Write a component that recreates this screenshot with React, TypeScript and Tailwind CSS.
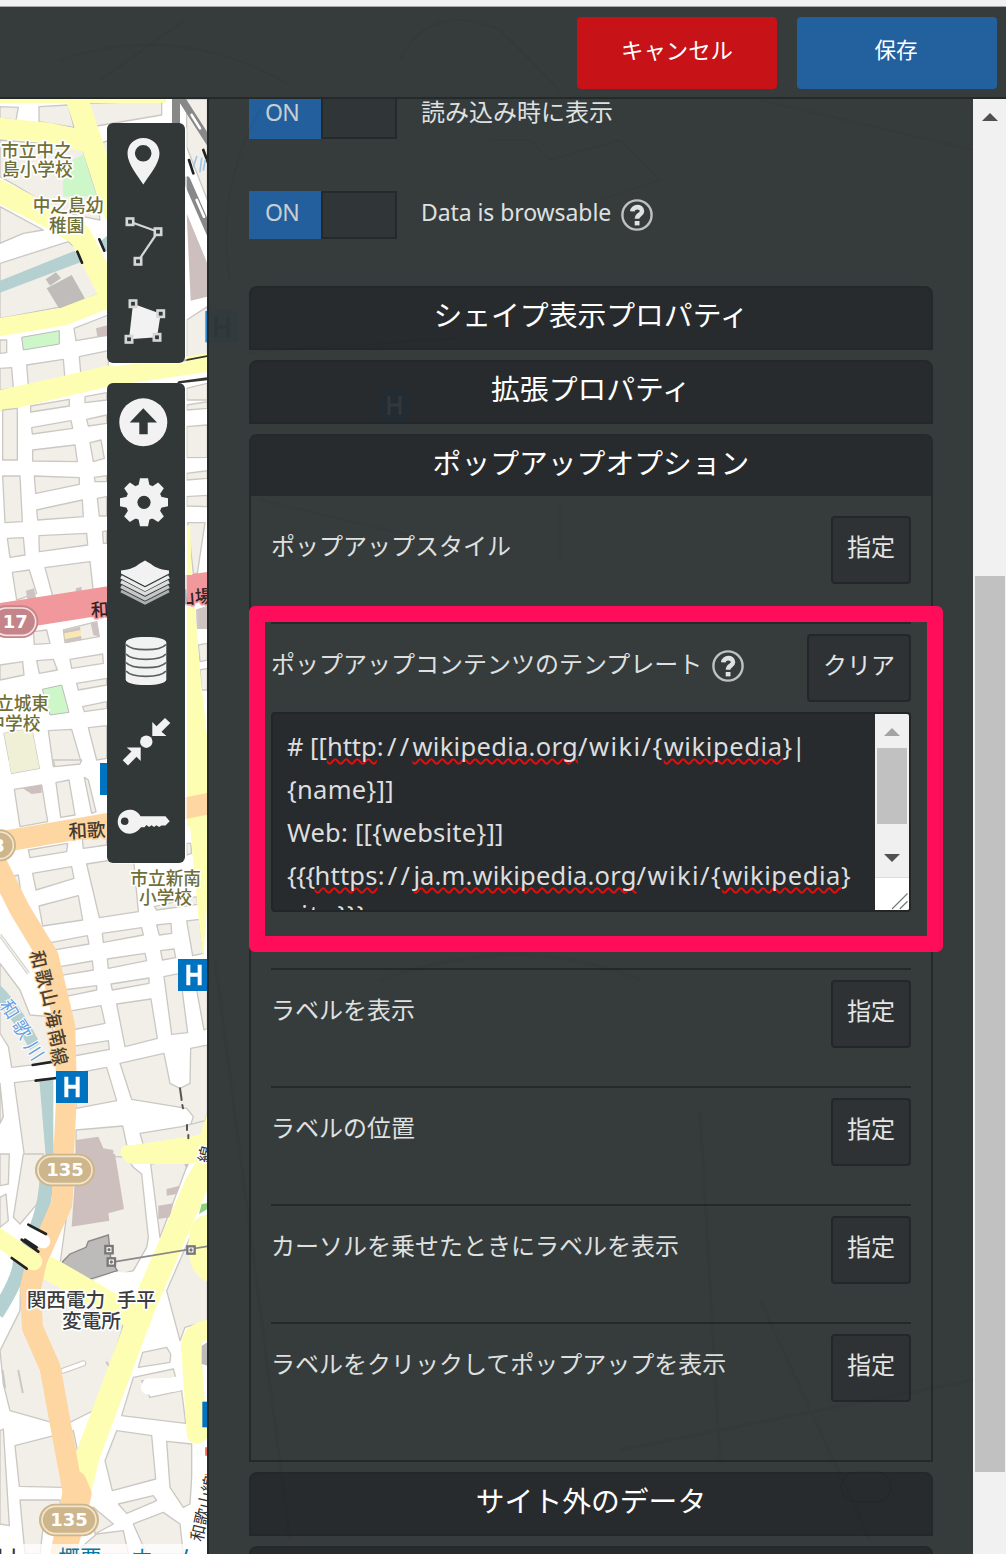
import React from "react";

const JP = "font-['Noto_Sans_CJK_JP',sans-serif]";

type Road = [string, string, number];

function Blocks({ items, fill = "#f2efe9" }: { items: string[]; fill?: string }) {
  return (
    <g fill={fill} stroke="#cbc8c3" strokeWidth="4" strokeLinejoin="round">
      {items.map((p) => (
        <polygon key={p} points={p} />
      ))}
    </g>
  );
}

function Roads({ items }: { items: Road[] }) {
  return (
    <g fill="none" strokeLinecap="round" strokeLinejoin="round">
      {items.map(([d, c, w]) => (
        <path key={d + c} d={d} stroke={c} strokeWidth={w} />
      ))}
    </g>
  );
}

function Label({ x, y, size, color = "#6f6f38", halo = "#fff", rotate, children }: { x: number; y: number; size: number; color?: string; halo?: string; rotate?: number; children: React.ReactNode }) {
  const transform = rotate ? `rotate(${rotate} ${x} ${y})` : undefined;
  return (
    <text x={x} y={y} fontSize={size} fontWeight="500" fill={color} stroke={halo} strokeWidth="10" strokeLinejoin="round" paintOrder="stroke" transform={transform}>
      {children}
    </text>
  );
}

function Hospital({ x, y }: { x: number; y: number }) {
  return (
    <g transform={`translate(${x} ${y})`}>
      <rect width="96" height="96" fill="#0073c0" />
      <path d="M31 17V79M65 17V79M31 47H65" stroke="#fff" strokeWidth="12" fill="none" />
    </g>
  );
}

function Shield({ x, y, text, fill, edge }: { x: number; y: number; text: string; fill: string; edge: string }) {
  return (
    <g>
      <rect x={x - 90} y={y - 49} width="180" height="98" rx="49" fill={fill} />
      <rect x={x - 81} y={y - 41} width="162" height="82" rx="41" fill="none" stroke={edge} strokeWidth="5" />
      <text x={x} y={y + 19} fontSize="54" fontWeight="bold" textAnchor="middle" fill="#fff" className="font-['DejaVu_Sans',sans-serif]">
        {text}
      </text>
    </g>
  );
}

const YEL = "#fefeb3";
const ORG = "#fed6a1";

function CityMap() {
  return (
    <svg viewBox="0 99 207 1455" className={"block h-full w-full bg-white " + JP}>
      <g transform="scale(.33333)">
        <Blocks
          items={[
            "0,320 55,322 48,360 0,355",
            "117,320 205,315 222,382 117,365",
            "265,310 485,303 485,345 290,378",
            "0,420 245,440 290,590 300,660 200,640 120,600 45,555 0,530",
            "300,430 330,420 330,560",
            "0,620 130,690 70,700 0,730",
            "0,790 205,725 245,760 298,880 215,915 0,955",
            "560,297 622,297 622,600 560,440",
            "222,985 325,945 325,1005 228,1022",
            "0,1020 20,1020 20,1058 0,1060",
            "80,1095 190,1078 195,1138 85,1155",
            "238,1070 325,1052 325,1115 243,1128",
            "0,1105 35,1103 40,1165 0,1170",
            "560,960 622,920 622,1065 560,1075",
            "560,1165 622,1150 622,1200 560,1200",
          ]}
        />
        <path d="M190 590L188 545L218 480L250 463L290 588Z" fill="#cdf7c9" />
        <path d="M65 1012L178 992L178 1032L70 1050Z" fill="#cdf7c9" stroke="#bbb" strokeWidth="3" />
        <path d="M0 842L225 752L245 785L0 878Z M300 725L330 700V770Z" fill="#b5d0d0" />
        <path d="M140 865L215 825L252 890L258 905L180 930Z M137 838L168 817L183 835L150 857Z" fill="#bebdb9" />
        <path d="M288 985L325 975V1008L292 1010Z M560 640L622 790V890L572 902Z" fill="#cdbfbe" />
        <Roads
          items={[
            ["M-20 300H490", YEL, 18],
            ["M-20 382L150 400L260 425", YEL, 62],
            ["M232 300L285 460L345 640", YEL, 66],
            ["M-30 560L130 640L240 705L340 900", YEL, 68],
            ["M-20 985L190 950L345 890", YEL, 54],
            ["M-20 1212L330 1130L640 1085", YEL, 56],
            ["M528 300V370", "#888", 24],
            ["M545 297L630 430M560 540L630 700", "#888", 22],
            ["M575 345L600 385M590 600L612 650", "#fff", 8],
            ["M232 755L246 788M298 718L313 752M610 450L625 490M567 480L580 520", "#222", 8],
            ["M590 470L580 500M605 475L600 515M616 480L610 510", "#9fc5ea", 5],
            ["M550 1082L622 1068M535 1148L622 1138", "#333", 5],
          ]}
        />
        <rect x="616" y="933" width="8" height="94" fill="#2b8ad0" />
        <Label x={3} y={471} size={53}>市立中之</Label>
        <Label x={6} y={529} size={53}>島小学校</Label>
        <Label x={98} y={637} size={53}>中之島幼</Label>
        <Label x={147} y={696} size={53}>稚園</Label>
      </g>

      <g transform="translate(0 380) scale(.33333)">
        <Blocks
          items={[
            "8,90 52,85 52,240 8,240",
            "92,78 208,58 208,78 92,96",
            "255,50 320,38 320,60 255,68",
            "95,143 213,122 218,145 97,162",
            "260,118 320,105 320,130 265,138",
            "98,210 225,195 232,245 98,243",
            "270,188 303,180 313,235 280,245",
            "8,288 60,288 67,425 15,428",
            "103,288 238,293 238,313 107,340",
            "283,292 320,287 320,305 285,305",
            "110,390 247,360 250,410 113,420",
            "292,355 320,350 320,408 298,408",
            "22,475 70,473 75,525 30,532",
            "117,467 260,460 263,495 118,515",
            "308,455 320,453 320,490 310,490",
            "37,577 88,570 110,640 50,660",
            "135,563 270,545 280,635 160,655",
            "0,855 68,845 72,885 0,900",
            "110,842 160,838 172,870 118,880",
            "210,838 308,822 310,850 215,865",
            "230,910 320,895 320,915 235,930",
            "248,980 320,965 320,985 253,995",
            "145,1052 215,1048 243,1145 160,1160",
            "265,1043 320,1037 320,1135 290,1140",
            "12,1060 95,1045 118,1165 35,1180",
            "100,755 140,750 150,790 103,793",
            "190,750 290,725 298,770 195,788",
            "560,75 622,65 622,85 560,90",
            "560,140 622,135 622,232 560,233",
            "560,280 622,272 622,295 560,300",
            "560,350 622,346 622,380 560,378",
            "563,428 615,428 592,580 580,580",
            "590,690 622,680 622,745 592,745",
            "595,795 622,790 622,840 600,845",
            "600,870 622,865 622,930 605,930",
          ]}
        />
        <path d="M12 1060L95 1045L118 1165L35 1180Z" fill="#f0f0d6" />
        <path d="M78 632L102 625L108 655L82 658Z M228 625L245 620V650L225 650Z M190 752L240 740L245 780L197 790Z M272 730L292 727L298 770L280 765Z M592 690L622 680V745H592Z" fill="#cfc2c2" />
        <path d="M193 760L243 750L243 768L195 778Z" fill="#f7e8b4" />
        <path d="M127 928L185 915L207 997L150 1005Z" fill="#cdf7c9" stroke="#bbb" strokeWidth="3" />
        <Roads
          items={[
            ["M-20 64L180 20L330 -15", YEL, 58],
            ["M-20 715L330 660L640 616", "#f0989b", 84],
            ["M566 440L570 560", YEL, 9],
          ]}
        />
        <path d="M561 680H585L600 870L622 1080V1210H561Z" fill={YEL} />
        <path d="M561 585V430L576 585Z" fill={YEL} />
        <path d="M535 6L622 -6" stroke="#333" strokeWidth="5" />
        <Label x={274} y={710} size={54} color="#322" halo="#f0989b" rotate={-4}>和</Label>
        <Label x={532} y={674} size={54} color="#322" halo="#f0989b" rotate={-4}>山場</Label>
        <g>
          <rect x="-30" y="676" width="145" height="98" rx="49" fill="#c38589" />
          <rect x="-22" y="684" width="129" height="82" rx="41" fill="none" stroke="#fae0e0" strokeWidth="5" />
          <text x="46" y="745" fontSize="54" fontWeight="bold" textAnchor="middle" fill="#fff" className="font-['DejaVu_Sans',sans-serif]">17</text>
        </g>
        <Label x={-12} y={990} size={53}>立城東</Label>
        <Label x={-38} y={1049} size={53}>中学校</Label>
        <rect x="300" y="1149" width="40" height="96" fill="#0073c0" />
      </g>

      <g transform="translate(0 760) scale(.33333)">
        <Blocks
          items={[
            "160,0 245,0 240,12 165,20",
            "43,88 125,75 143,185 60,200",
            "168,68 207,60 225,165 182,172",
            "253,52 265,60 288,155 275,160",
            "85,270 203,250 200,275 90,293",
            "247,238 320,225 320,255 250,265",
            "98,340 215,320 222,355 108,390",
            "260,312 400,290 415,455 298,473",
            "117,438 235,407 248,480 128,498",
            "22,352 55,345 65,412",
            "140,550 262,527 267,552 150,572",
            "307,520 425,503 430,525 310,547",
            "168,622 277,603 280,630 178,647",
            "322,597 435,580 440,602 325,625",
            "190,690 290,677 290,690 195,710",
            "333,672 447,654 447,670 337,690",
            "200,755 303,737 315,790 215,810",
            "350,732 453,717 472,835 375,860",
            "215,860 325,842 328,868 222,888",
            "470,495 513,490 515,520 478,525",
            "482,572 522,567 527,593 487,600",
            "560,483 598,478 610,580 578,587",
            "492,650 540,640 563,818 515,823",
            "590,690 622,670 622,805 612,810",
            "225,940 320,922 350,1022 228,1045",
            "360,910 492,880 510,970 540,985 570,970 572,865 622,855 622,1060 600,1130 560,1130 580,1070 560,1045 395,1018",
            "228,1110 368,1098 390,1200 228,1200",
            "420,1120 545,1100 622,1080 622,1130 430,1155",
            "0,610 60,690 90,765 150,770 180,905 35,922 25,860 0,820",
            "43,968 150,955 160,1200 75,1200",
            "0,970 10,1070 0,1090",
            "560,250 572,250 575,280 560,285",
            "463,440 590,410 593,433 470,450",
          ]}
        />
        <path d="M0 525L85 640" stroke="#ccc9c4" strokeWidth="10" fill="none" />
        <path d="M0 525L85 640" stroke="#f2efe9" strokeWidth="5" fill="none" />
        <path d="M68 85L125 75V98L95 102Z M228 1140L295 1130L310 1165L340 1170V1200H228Z" fill="#cdbfbe" />
        <path d="M-5 670Q60 730 120 850L90 870Q50 790 -5 735Z M118 960H160V1200H138Z" fill="#b5d0d0" />
        <path d="M25 0H115V20L35 40Z" fill="#f0f0d6" />
        <path d="M561 0H622V420L610 600L595 470L570 200H561Z" fill={YEL} />
        <path d="M383 1205V1170L400 1155L600 1125L622 1060V1205Z" fill={YEL} />
        <Roads
          items={[
            ["M-20 250L330 190L630 130", ORG, 64],
            ["M-20 290L60 450L145 590L195 800L200 1000L190 1210", ORG, 62],
            ["M98 915L180 902M107 962L170 954", "#222", 8],
            ["M540 985L545 1020M547 1035L549 1045M561 1095V1110M565 1125V1135", "#555", 6],
          ]}
        />
        <Label x={206} y={235} size={56} color="#433a2e" halo={ORG} rotate={-3}>和歌</Label>
        <g>
          <circle cx="0" cy="256" r="48" fill="#cdb58c" />
          <circle cx="0" cy="256" r="40" fill="none" stroke="#f5e6cb" strokeWidth="5" />
          <text x="-22" y="275" fontSize="52" fontWeight="bold" fill="#fff" className="font-['DejaVu_Sans',sans-serif]">3</text>
        </g>
        <g fill="#4b4032" fontSize="56" fontWeight="500" stroke={ORG} strokeWidth="6" paintOrder="stroke">
          {[
            ["和", 115, 598], ["歌", 132, 655], ["山", 148, 712], ["海", 160, 776], ["南", 171, 834], ["線", 178, 889],
          ].map(([c, x, y]) => (
            <text key={c} transform={`translate(${x} ${y}) rotate(77) scale(.95 1)`} x="-28" y="20">{c}</text>
          ))}
        </g>
        <g fill="#6da0de" stroke="#fff" strokeWidth="6" paintOrder="stroke" fontSize="56">
          <text transform="translate(28 748) rotate(58)" x="-28" y="20">和</text>
          <text transform="translate(66 808) rotate(58)" x="-28" y="20">歌</text>
          <text transform="translate(102 872) rotate(58)" x="-28" y="20">川</text>
        </g>
        <Label x={391} y={374} size={53}>市立新南</Label>
        <Label x={417} y={432} size={53}>小学校</Label>
        <rect x="300" y="9" width="40" height="96" fill="#0073c0" />
        <Hospital x={534} y={597} />
        <Hospital x={168} y={933} />
      </g>

      <g transform="translate(0 1154) scale(.33333)">
        <Blocks
          items={[
            "70,0 130,0 120,140 60,210 40,190",
            "0,0 28,0 25,90 0,95",
            "0,130 18,120 25,200 0,220",
            "225,0 380,10 400,40 425,60 445,250 440,280 400,350 270,385 180,330",
            "452,30 570,12 480,250",
            "0,590 60,470 62,370 160,345 380,460 365,530 290,765 190,815 30,770 10,690",
            "500,410 570,250 622,300 622,500 555,520 540,560",
            "428,595 500,580 512,600 510,625 415,640",
            "400,670 520,645 527,670 450,680 425,680 450,730 545,710 557,808 365,785",
            "45,875 220,830 245,950 190,1000 58,997",
            "0,830 10,825 28,1115 0,1110",
            "350,830 455,845 467,975 337,1010 315,920",
            "500,862 575,870 575,970 570,1050 550,1060 510,1000",
            "355,1050 460,1025 470,1040 380,1078",
            "60,1038 180,1038 185,1075 130,1115 120,1200 75,1200",
            "280,1060 340,1110 285,1140",
            "400,1110 490,1075 540,1110 550,1200 440,1200",
            "290,1140 370,1130 385,1200 220,1200",
          ]}
        />
        <path d="M230 0H345L372 165L325 178L328 200L215 218Z M548 20L575 10L560 45Z M500 105L540 95L530 120L500 125Z M475 155L520 148L510 190L475 195Z" fill="#cdbfbe" />
        <path d="M190 320L210 300L258 280L265 262L325 243L333 320L352 350L250 382L180 340Z" fill="#bcbbb9" stroke="#888" strokeWidth="4" />
        <path d="M-10 480Q60 370 60 320Q135 200 140 70" fill="none" stroke="#b5d0d0" strokeWidth="42" />
        <Roads
          items={[
            ["M270 400L345 370L420 370", "#fff", 30],
            ["M190 650L250 628", "#cbc8c3", 18],
            ["M190 650L250 628", "#fff", 12],
            ["M445 700L530 690", "#fff", 44],
            ["M445 690L530 690", "#fff", 34],
            ["M8 650L15 700M55 650L68 715M320 625L330 640", "#cbc8c3", 6],
            ["M192 50L185 150L110 320L92 400L97 520L150 640L185 830L220 1010L180 1210", ORG, 62],
            ["M150 345L400 490", YEL, 70],
            ["M620 40L590 90L430 460L265 900L240 1000", YEL, 72],
            ["M383 -5H575M395 8H570", YEL, 44],
            ["M640 525Q560 530 575 600L590 840L640 800", YEL, 60],
            ["M640 215Q590 200 598 290Q600 345 640 355", YEL, 62],
            ["M192 50L185 150L110 320L92 400L97 520L150 640L185 830L218 1010", ORG, 62],
            ["M225 985L240 1020L190 1210", ORG, 70],
            ["M-20 240L100 322", YEL, 54],
            ["M70 235L130 262", "#fff", 42],
            ["M85 212L138 240M65 257L115 293M75 257L110 280M35 312L80 344", "#222", 8],
            ["M333 325L622 277", "#8a8a88", 5],
          ]}
        />
        <path d="M605 575L622 565V635L605 630Z" fill="#bcbbb9" />
        <path d="M597 180L605 150L622 148V165Z" fill="#8ed07c" />
        <g fill="#fff" stroke="#777" strokeWidth="7">
          <rect x="316" y="276" width="22" height="22" />
          <rect x="323" y="313" width="22" height="22" />
          <rect x="562" y="277" width="22" height="22" />
        </g>
        <g fill="#777">
          <circle cx="327" cy="287" r="5" />
          <circle cx="334" cy="324" r="5" />
          <circle cx="573" cy="288" r="5" />
        </g>
        <path d="M607 743H622V820H607Z" fill="#0073c0" />
        <path d="M619 880V905M617 960V1000" stroke="#ef6f5a" strokeWidth="7" />
        <Label x={80} y={460} size={59} color="#3c3c3c">関西電力</Label>
        <Label x={350} y={460} size={59} color="#3c3c3c">手平</Label>
        <Label x={186} y={523} size={59} color="#3c3c3c">変電所</Label>
        <g fill="#333" fontSize="50" stroke="#fff" strokeWidth="8" paintOrder="stroke">
          <text transform="translate(607 1165) rotate(-77)">和歌山線</text>
          <text transform="translate(630 30) rotate(-77)">線</text>
        </g>
        <Shield x={195} y={48} text="135" fill="#cdb58c" edge="#f5e6cb" />
        <Shield x={207} y={1098} text="135" fill="#cdb58c" edge="#f5e6cb" />
        <rect x="0" y="1170" width="622" height="40" fill="#fff" opacity=".75" />
        <g fontSize="65" fill="#0078a8">
          <text x="-8" y="1235" fill="#333">bl.</text>
          <text x="175" y="1235">概要</text>
          <text x="393" y="1235">ホ</text>
          <text x="530" y="1235">ム</text>
        </g>
      </g>
    </svg>
  );
}

const I = "#f2f2f2";
const BG = "#323838";

function Nodes({ pts }: { pts: [number, number][] }) {
  return (
    <g fill={BG} stroke="#d5d7d7" strokeWidth="2.6">
      {pts.map(([x, y]) => (
        <rect key={x} x={x - 3.2} y={y - 3.2} width="6.4" height="6.4" />
      ))}
    </g>
  );
}

const drawIcons = [
  <path fill={I} fillRule="evenodd" d="M36.300 15C27 15 20.500 22 20.500 30.500C20.500 41 31 53 36.300 61.500C41.500 53 52.500 41 52.500 30.500C52.500 22 45.500 15 36.300 15ZM36.200 22A8.300 8.300 0 1 1 36.200 38.600A8.300 8.300 0 1 1 36.200 22Z" />,
  <>
    <path d="M23 18.700L51 28.700L31 58.300" fill="none" stroke="#d5d7d7" strokeWidth="2.200" />
    <Nodes pts={[[23, 18.700], [51, 28.700], [31, 58.300]]} />
  </>,
  <>
    <path d="M26 20.700L53.700 30.700L50 54.300L22 56.300Z" fill={I} />
    <Nodes pts={[[26, 20.700], [53.700, 30.700], [50, 54.300], [22, 56.300]]} />
  </>,
];

const mapIcons = [
  <>
    <circle cx="36.300" cy="39.300" r="24" fill={I} />
    <path d="M36.300 25.300L50 39.500H40.700V51.300H32.300V39.500H22.700Z" fill={BG} />
  </>,
  <g transform="translate(37 39.300)">
    <g fill={I}>
      <circle r="18.200" />
      {[0, 45, 90, 135].map((a) => (
        <path key={a} d="M-5.500 -17L-4 -24H4L5.500 -17V17L4 24H-4L-5.500 17Z" transform={`rotate(${a})`} />
      ))}
    </g>
    <circle r="6.600" fill={BG} />
  </g>,
  <>
    <path d="M14 27.500C24 26.500 29 23.500 32 21L38 17.500L44 21C47 23.500 52 26.500 62 27.500V30.500L38 43L14 30.500Z" fill={I} />
    <g fill="none" strokeWidth="3.500">
      <path d="M14 33.700L38 46.200L62 33.700" stroke="#ececec" />
      <path d="M14 38.600L38 50.900L62 38.600" stroke="#dcdddd" />
      <path d="M14 43.500L38 55.800L62 43.500" stroke="#c6c8c8" />
      <path d="M14 48L38 60.300L62 48" stroke="#adb0b0" strokeWidth="2.800" />
    </g>
  </>,
  <>
    <path d="M18.700 19.500C18.700 16 27 14 39 14S59.300 16 59.300 19.500V56.500C59.300 60 51 62 39 62S18.700 60 18.700 56.500Z" fill={I} />
    <g fill="none" stroke="#596060" strokeWidth="1.800">
      <path d="M19 21.500C22 25 29 26.700 39 26.700S56 25 59 21.500" />
      <path d="M19 31C22 34.500 29 36.300 39 36.300S56 34.500 59 31" />
      <path d="M19 39.500C22 43 29 44.700 39 44.700S56 43 59 39.500" />
      <path d="M19 48C22 51.500 29 53.300 39 53.300S56 51.500 59 48" />
    </g>
  </>,
  <g fill={I}>
    <circle cx="39.300" cy="38.700" r="6.200" />
    <path d="M45.300 19L49.500 23.300L58 15L63.300 20L54.500 28.700L59.500 33H45.300Z" />
    <path d="M33.700 58L29.500 53.700L21 62.500L15.700 57.200L24.500 48.500L19.700 44.600H33.700Z" />
  </g>,
  <>
    <path d="M33.500 33.200C31 28.500 27 26.700 22.700 26.700A12 12 0 1 0 22.700 50.700C27 50.700 31 48.500 34 44.300H37.500L39.500 42L42 44L44.500 42.200L47 44L49.500 42.200L52 44L54.500 42.500H58.500L62.700 38.300L58.500 33.200Z" fill={I} />
    <circle cx="17.700" cy="38.300" r="3.800" fill={BG} />
  </>,
];

function Toolbar({ icons }: { icons: React.ReactNode[] }) {
  return (
    <div className="flex w-[78px] flex-col rounded-[6px] bg-[#323838] shadow-[2px_1px_0_rgba(255,255,255,0.6)]">
      {icons.map((icon, i) => (
        <button key={i} className="block h-20 w-[78px]">
          <svg viewBox="0 0 78 80" className="block h-20 w-[78px]">{icon}</svg>
        </button>
      ))}
    </div>
  );
}

function Help() {
  return (
    <svg viewBox="0 0 32 32" className="block h-8 w-8 shrink-0">
      <circle cx="16" cy="16" r="14.600" fill="none" stroke="#bfc1c1" strokeWidth="2.400" />
      <path d="M11.300 12.400C11.600 6.800 21 6.700 21 12.200C21 15.800 16 15.500 16 19.800" fill="none" stroke="#e0e1e1" strokeWidth="4.600" />
      <rect x="13.700" y="22" width="4.800" height="4.400" fill="#e0e1e1" />
    </svg>
  );
}

function Toggle({ className }: { className: string }) {
  return (
    <div className={"flex w-[148px] shrink-0 " + className}>
      <div className="flex w-[72px] items-center justify-center bg-[#235f9d] pr-[6px] pb-1.5 font-['Noto_Sans',sans-serif] text-[23px] tracking-[-0.8px] text-[#c9cdd0]">ON</div>
      <div className="flex-1 border-2 border-[#25292b] bg-[#303537]" />
    </div>
  );
}

function Legend({ children }: { children: React.ReactNode }) {
  return (
    <div className="mb-2.5 h-16 shrink-0 rounded-t-[8px] border-2 border-[#25282a] bg-[#272b2d] text-center text-[28.8px] leading-[51px] text-white">{children}</div>
  );
}

function SetButton({ children = "指定", className = "w-20" }: { children?: React.ReactNode; className?: string }) {
  return (
    <button className={"h-[68px] shrink-0 rounded-[4px] border-2 border-[#232729] bg-[#2e3235] pb-2 text-[24px] leading-[56px] text-[#e4e5e5] " + className}>{children}</button>
  );
}

function Field({ label }: { label: string }) {
  return (
    <div className="flex h-[118px] justify-between border-t-2 border-[#26292a] pt-2.5">
      <span className="leading-[57px]">{label}</span>
      <SetButton />
    </div>
  );
}

function Wavy({ children, className = "" }: { children: string; className?: string }) {
  return (
    <span className={"underline decoration-[#f00a0a] decoration-wavy decoration-[1.6px] underline-offset-[2px] [text-decoration-skip-ink:none] " + className}>{children}</span>
  );
}

function Arrow({ up, color }: { up?: boolean; color: string }) {
  return (
    <svg viewBox="0 0 16 8" className="block h-2 w-4">
      <path d={up ? "M0 8L8 0L16 8Z" : "M0 0L8 8L16 0Z"} fill={color} />
    </svg>
  );
}

function TemplateEditor() {
  return (
    <div className="flex h-[200px] overflow-hidden rounded-[4px] border-2 border-[#222627] bg-[#272b2d]">
      <div className="flex-1 overflow-hidden pt-[11px] pl-3.5 font-['Noto_Sans',sans-serif] text-[25.5px] leading-[43px] whitespace-nowrap text-[#dededf]">
        <div>
          # [[<Wavy>http</Wavy>
          <span className="tracking-[3.300px]">://</span>
          <Wavy className="tracking-[0.300px]">wikipedia.org</Wavy>
          <span className="tracking-[1.450px]">/wiki/{"{"}</span>
          <Wavy className="tracking-[0.600px]">wikipedia</Wavy>
          <span className="-tracking-[0.500px]">{"}|"}</span>
        </div>
        <div className="tracking-[0.300px]">{"{name}]]"}</div>
        <div className="tracking-[0.250px]">{"Web: [[{website}]]"}</div>
        <div>
          <span className="tracking-[-0.500px]">{"{{{"}</span>
          <Wavy className="tracking-[0.200px]">https</Wavy>
          <span className="tracking-[3.300px]">://</span>
          <Wavy className="tracking-[0.170px]">ja.m.wikipedia.org</Wavy>
          <span className="tracking-[1.450px]">/wiki/{"{"}</span>
          <Wavy className="tracking-[0.600px]">wikipedia</Wavy>
          {"}"}
        </div>
        <div className="-mt-[4px]"><span className="tracking-[2px]">site</span>{"}}}"}</div>
      </div>
      <div className="flex w-[34px] flex-col items-center bg-[#f0f0f0]">
        <div className="flex h-[34px] items-center pt-0.5"><Arrow up color="#a3a3a3" /></div>
        <div className="h-[76px] w-[30px] bg-[#c1c1c1]" />
        <div className="flex h-[53px] items-end pb-[15px]"><Arrow color="#505050" /></div>
        <svg viewBox="0 0 34 33" className="block h-[33px] w-[34px] border-t border-[#ddd] bg-white">
          <path d="M17 32L33 16M25 32L33 24" stroke="#777" strokeWidth="1.200" />
        </svg>
      </div>
    </div>
  );
}

function Ghost() {
  return (
    <svg viewBox="0 0 1006 1554" className={"pointer-events-none absolute inset-0 h-full w-full " + JP}>
      <g fill="none" stroke="#101820" opacity=".04" strokeWidth="2">
        <path d="M60 60Q180 20 290 85M400 60Q430 0 500 30L560 90M100 80L185 20M260 110Q215 190 230 280M490 140H530L550 160L620 140L660 180L600 200M249 352L460 338M760 100L973 150M260 500L430 540M560 500V560M940 700V960" />
        <path d="M215 960L290 1540M380 980Q520 930 640 980M700 1110L720 1460M620 1450L973 1380M760 1300L870 1540" strokeWidth="3" />
      </g>
      <g opacity=".1">
        <rect x="209" y="311" width="29" height="31" fill="#0a3a60" />
        <path d="M216 317V337M228 317V337M216 327H228" stroke="#000" strokeWidth="3" />
        <rect x="379" y="389" width="31" height="32" fill="#0a3a60" />
        <path d="M389 396V415M400 396V415M389 405H400" stroke="#9ab" strokeWidth="3" />
        <rect x="841" y="1472" width="50" height="30" rx="15" fill="none" stroke="#000" />
      </g>
    </svg>
  );
}

export default function App() {
  return (
    <div className={"relative flex h-[1554px] w-[1006px] flex-col overflow-hidden bg-[#363b3b] text-[#dfe0e0] " + JP}>
      <div className="h-[7px] shrink-0 border-b border-[#a5a8a8] bg-[#f1f1f2]" />
      <header className="flex h-[92px] shrink-0 justify-end gap-5 border-b-2 border-[#26292a] pt-2.5 pr-[9px]">
        <button className="h-[72px] w-[200px] rounded-[4px] bg-[#c71317] pb-1.5 text-[22.4px] text-white">キャンセル</button>
        <button className="h-[72px] w-[200px] rounded-[4px] bg-[#23609e] pr-0.5 pb-[7px] text-[21.6px] text-white">保存</button>
      </header>

      <div className="flex min-h-0 flex-1">
        <aside className="relative w-[207px] shrink-0">
          <CityMap />
          <div className="absolute top-6 left-[107px] flex flex-col gap-5">
            <Toolbar icons={drawIcons} />
            <Toolbar icons={mapIcons} />
          </div>
        </aside>

        <main className="flex min-w-0 flex-1 flex-col overflow-hidden border-l-2 border-[#26292a] pr-10 pl-10 text-[24px]">
          <div className="flex h-[92px] shrink-0 gap-6">
            <Toggle className="h-10 [&>div:first-child]:pb-[13px] [&>div:last-child]:border-t-0" />
            <span className="-mt-[5px] leading-[34px]">読み込み時に表示</span>
          </div>
          <div className="flex h-[95px] shrink-0 gap-6">
            <Toggle className="h-12" />
            <span className="font-['Noto_Sans',sans-serif] text-[23px] leading-[42px] tracking-[-0.080px]">Data is browsable</span>
            <div className="-ml-3.5 pt-2"><Help /></div>
          </div>

          <Legend>シェイプ表示プロパティ</Legend>
          <Legend>拡張プロパティ</Legend>
          <section className="relative mb-2.5 h-[1028px] shrink-0 rounded-t-[8px] border-2 border-[#26292a]">
            <h2 className="h-[60px] rounded-t-[6px] bg-[#272b2d] text-center text-[28.8px] leading-[51px] text-white">ポップアップオプション</h2>
            <div className="px-5 pt-5">
              <div className="flex h-[106px] justify-between">
                <span className="leading-[57px]">ポップアップスタイル</span>
                <SetButton />
              </div>
              <div className="h-[346px] border-t-2 border-[#26292a] pt-2.5">
                <div className="mb-2.5 flex h-[68px]">
                  <span className="leading-[57px]">ポップアップコンテンツのテンプレート</span>
                  <div className="mr-auto ml-[10px] pt-4"><Help /></div>
                  <SetButton className="w-[104px]">クリア</SetButton>
                </div>
                <TemplateEditor />
              </div>
              <Field label="ラベルを表示" />
              <Field label="ラベルの位置" />
              <Field label="カーソルを乗せたときにラベルを表示" />
              <Field label="ラベルをクリックしてポップアップを表示" />
            </div>
            <div className="absolute top-[170px] -left-0.5 h-[346px] w-[694px] rounded-[6px] border-[16px] border-[#ff0d5a]" />
          </section>
          <Legend>サイト外のデータ</Legend>
          <Legend>{" "}</Legend>
        </main>

        <div className="flex w-[33px] shrink-0 flex-col items-center bg-[#f1f1f1]">
          <div className="flex h-[477px] pt-3.5"><Arrow up color="#505050" /></div>
          <div className="h-[896px] w-[30px] bg-[#c1c1c1]" />
        </div>
      </div>
      <Ghost />
    </div>
  );
}
